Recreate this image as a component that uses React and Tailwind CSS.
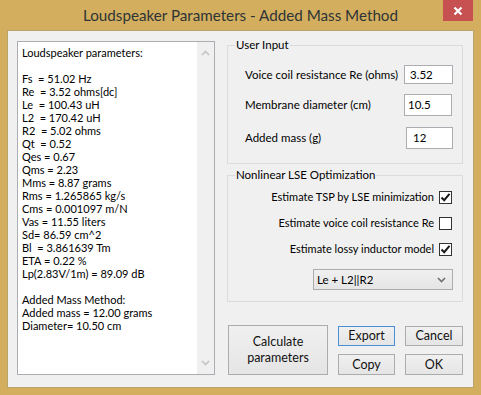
import React from 'react'

const font = { fontFamily: 'Lato, "Noto Sans", sans-serif' }

const reportLines = [
  'Loudspeaker parameters:',
  '',
  'Fs  = 51.02 Hz',
  'Re  = 3.52 ohms[dc]',
  'Le  = 100.43 uH',
  'L2  = 170.42 uH',
  'R2  = 5.02 ohms',
  'Qt  = 0.52',
  'Qes = 0.67',
  'Qms = 2.23',
  'Mms = 8.87 grams',
  'Rms = 1.265865 kg/s',
  'Cms = 0.001097 m/N',
  'Vas = 11.55 liters',
  'Sd= 86.59 cm^2',
  'Bl  = 3.861639 Tm',
  'ETA = 0.22 %',
  'Lp(2.83V/1m) = 89.09 dB',
  '',
  'Added Mass Method:',
  'Added mass = 12.00 grams',
  'Diameter= 10.50 cm',
]

function Chevron({ up = false, className = '' }) {
  return (
    <svg width="9" height="6" viewBox="0 0 9 6" className={className}>
      <path
        d={up ? 'M1 5 L4.5 1.5 L8 5' : 'M1 1 L4.5 4.5 L8 1'}
        fill="none"
        stroke="currentColor"
        strokeWidth="1.6"
      />
    </svg>
  )
}

function CheckBox({ checked }) {
  return (
    <div className="w-[13px] h-[13px] shrink-0 border border-[#333] bg-white flex items-center justify-center">
      {checked && (
        <svg width="11" height="11" viewBox="0 0 11 11">
          <path d="M1.5 5.5 L4.2 8.2 L9.5 1.8" fill="none" stroke="#1a1a1a" strokeWidth="2" />
        </svg>
      )}
    </div>
  )
}

function Button({ children, className = '' }) {
  return (
    <div
      className={`flex items-center justify-center text-center border bg-gradient-to-b from-[#f0f0f0] to-[#e5e5e5] text-[12.5px] leading-[16px] text-[#111] ${className}`}
    >
      {children}
    </div>
  )
}

export default function App() {
  return (
    <div className="w-[481px] h-[395px] bg-[#d3ae5e] flex flex-col" style={font}>
      {/* Title bar */}
      <div className="h-[30px] flex shrink-0">
        <div className="w-[38px]" />
        <div className="flex-1 text-center text-[15.2px] leading-[30px] text-[#2e3436] whitespace-nowrap">
          Loudspeaker Parameters - Added Mass Method
        </div>
        <div className="w-[30px] h-[21px] bg-[#c75050] flex items-center justify-center">
          <svg width="10" height="10" viewBox="0 0 10 10">
            <path d="M1.5 1.5 L8.5 8.5 M8.5 1.5 L1.5 8.5" stroke="white" strokeWidth="2.2" />
          </svg>
        </div>
        <div className="w-[8px]" />
      </div>

      {/* Client area */}
      <div className="mx-[7px] h-[358px] border border-[#bba468] bg-[#f0f0f0] flex items-start">
        {/* Result text box */}
        <div className="ml-[9px] mt-[10px] w-[198px] h-[334px] border border-[#abadb3] bg-white flex">
          <div className="flex-1 pl-[4px] pt-[4px] text-[11px] leading-[13px] text-black whitespace-pre">
            {reportLines.map((line, i) => (
              <div key={i} className="h-[13px]">{line}</div>
            ))}
          </div>
          <div className="w-[17px] bg-[#f0f0f0] flex flex-col items-center justify-between py-[8px] text-[#c4c4c4]">
            <Chevron up />
            <Chevron />
          </div>
        </div>

        {/* Right column */}
        <div className="ml-[12px] mt-[14px] w-[236px] flex flex-col">
          {/* User Input */}
          <div className="relative h-[119px] border border-[#dcdcdc] pl-[17px] pr-[9px] pt-[19px] text-[11.5px] text-black">
            <span className="absolute left-[7px] top-[-8px] px-[1px] leading-[14px] bg-[#f0f0f0]">User Input</span>
            <div className="flex items-center justify-between h-[19px]">
              <span className="whitespace-nowrap">Voice coil resistance Re (ohms)</span>
              <div className="w-[49px] h-[19px] shrink-0 border border-[#abadb3] bg-white pl-[5px] leading-[17px]">3.52</div>
            </div>
            <div className="flex items-center justify-between h-[22px] mt-[10px] pr-[1px]">
              <span className="whitespace-nowrap">Membrane diameter (cm)</span>
              <div className="w-[48px] h-[22px] shrink-0 border border-[#abadb3] bg-white pl-[3px] leading-[20px]">10.5</div>
            </div>
            <div className="flex items-center justify-between h-[22px] mt-[11px]">
              <span className="whitespace-nowrap">Added mass (g)</span>
              <div className="w-[47px] h-[22px] shrink-0 border border-[#abadb3] bg-white pl-[6px] leading-[20px]">12</div>
            </div>
          </div>

          {/* Nonlinear LSE Optimization */}
          <div className="relative mt-[11px] h-[127px] border border-[#dcdcdc] pr-[10px] pt-[15px] text-[11.5px] text-black flex flex-col items-end">
            <span className="absolute left-[7px] top-[-8px] px-[1px] leading-[14px] bg-[#f0f0f0]">Nonlinear LSE Optimization</span>
            <div className="flex items-center gap-[5px] h-[13px] text-[11px]">
              <span className="whitespace-nowrap">Estimate TSP by LSE minimization</span>
              <CheckBox checked />
            </div>
            <div className="flex items-center gap-[5px] h-[13px] mt-[13px] text-[11px]">
              <span className="whitespace-nowrap">Estimate voice coil resistance Re</span>
              <CheckBox />
            </div>
            <div className="flex items-center gap-[5px] h-[13px] mt-[13px] text-[11px]">
              <span className="whitespace-nowrap">Estimate lossy inductor model</span>
              <CheckBox checked />
            </div>
            <div className="mt-[13px] mr-[-1px] w-[140px] h-[21px] border border-[#acacac] bg-gradient-to-b from-[#f0f0f0] to-[#e5e5e5] flex items-center justify-between pl-[3px] pr-[6px]">
              <span className="leading-[19px]">Le + L2||R2</span>
              <Chevron className="text-[#707070]" />
            </div>
          </div>

          {/* Buttons */}
          <div className="mt-[23px] ml-[1px] flex items-start">
            <Button className="w-[100px] h-[50px] border-[#acacac]">Calculate<br />parameters</Button>
            <div className="ml-[10px] mt-[1px] grid grid-cols-[57px_58px] gap-x-[10px] gap-y-[8px]">
              <Button className="h-[20px] border-[#4a8fd6]">Export</Button>
              <Button className="h-[20px] border-[#acacac]">Cancel</Button>
              <Button className="h-[21px] border-[#acacac]">Copy</Button>
              <Button className="h-[21px] border-[#acacac]">OK</Button>
            </div>
          </div>
        </div>
      </div>
    </div>
  )
}
